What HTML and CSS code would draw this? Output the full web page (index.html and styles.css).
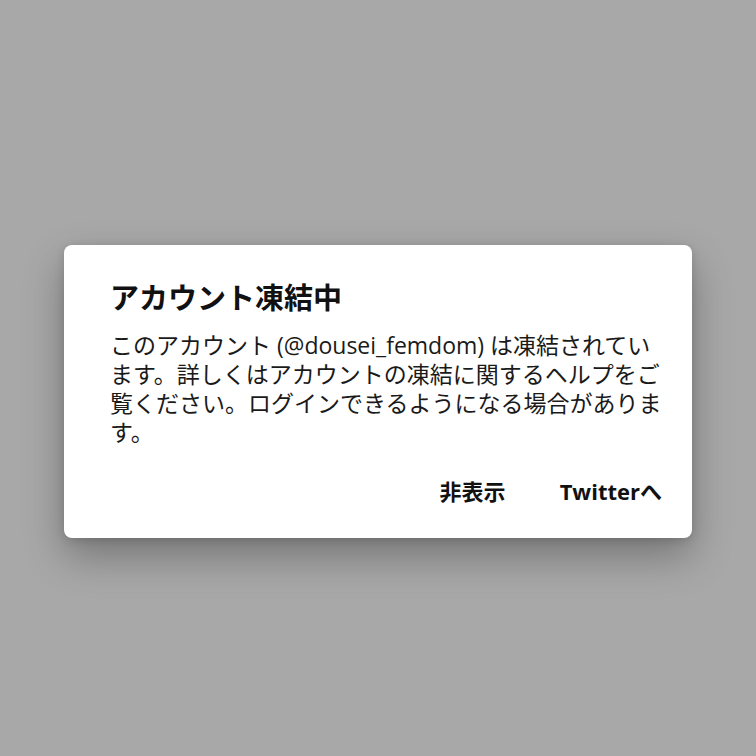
FILE: index.html
```html
<!DOCTYPE html>
<html lang="ja">
<head>
<meta charset="utf-8">
<link rel="stylesheet" href="styles.css">
</head>
<body>
<div class="screen">
  <div class="dialog">
    <h1 class="title">アカウント凍結中</h1>
    <p class="message">このアカウント (@dousei_femdom) は凍結されています。詳しくはアカウントの凍結に関するヘルプをご覧ください。ログインできるようになる場合があります。</p>
    <div class="actions">
      <span class="btn">非表示</span>
      <span class="btn">Twitterへ</span>
    </div>
  </div>
</div>
</body>
</html>
```

FILE: styles.css
```css
html, body {
  margin: 0;
  padding: 0;
  background: #a8a8a8;
}
.screen {
  width: 756px;
  height: 756px;
  box-sizing: border-box;
  padding-top: 245px;
  font-family: "Open Sans", "Noto Sans CJK JP", sans-serif;
  color: #141414;
}
.dialog {
  width: 628px;
  height: 293px;
  margin: 0 auto;
  box-sizing: border-box;
  background: #ffffff;
  border-radius: 8px;
  padding: 36px 30px 0 46px;
  box-shadow: 0 18px 40px rgba(0, 0, 0, 0.3), 0 2px 10px rgba(0, 0, 0, 0.14);
}
.title {
  margin: 0;
  font-size: 29px;
  line-height: 34px;
  font-weight: 700;
  color: #111111;
}
.message {
  margin: 16px 0 0 0;
  width: 560px;
  font-size: 23px;
  line-height: 29px;
  font-weight: 400;
  color: #1a1a1a;
}
.actions {
  display: flex;
  justify-content: flex-end;
  gap: 54px;
  margin-top: 32px;
}
.btn {
  font-size: 22px;
  line-height: 24px;
  font-weight: 700;
  color: #111111;
}
```
